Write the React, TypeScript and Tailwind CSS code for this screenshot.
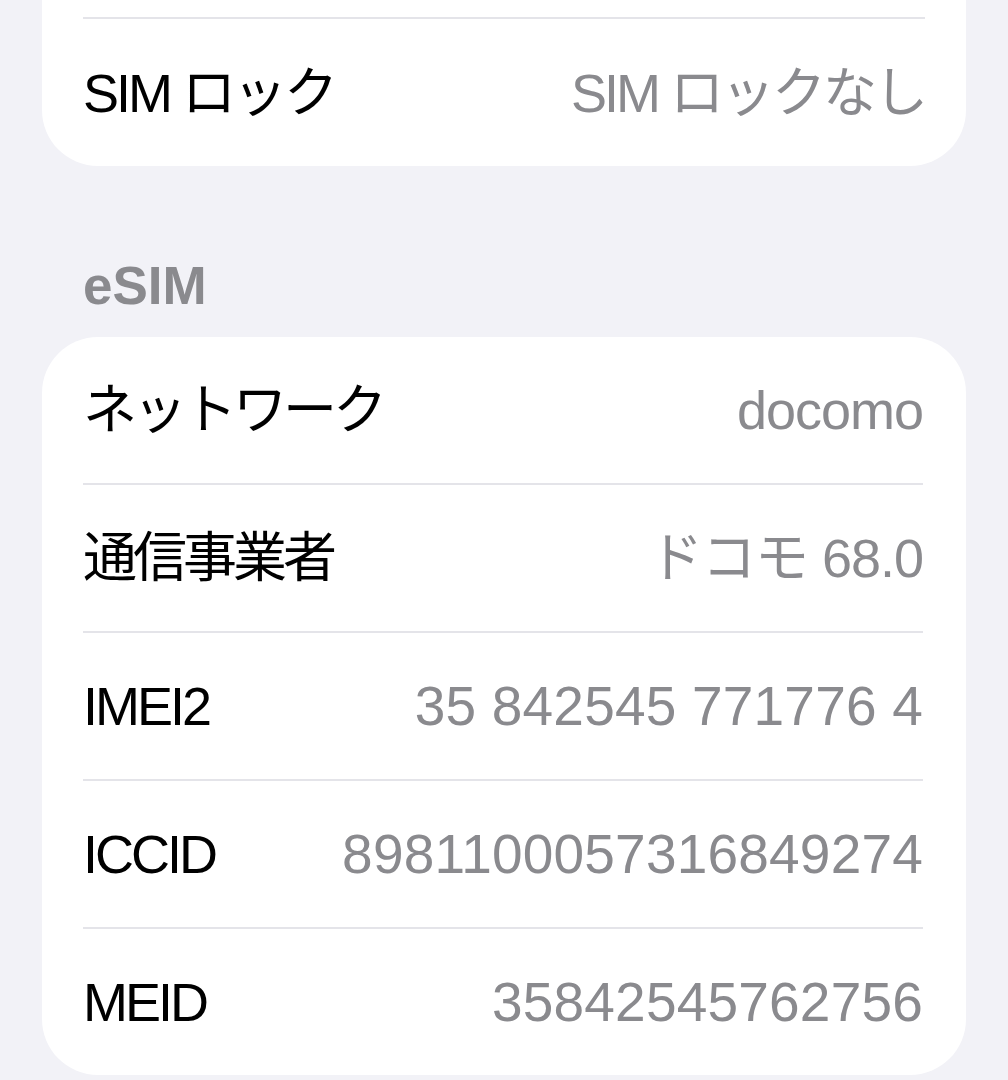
const font = {
  fontFamily: '"Liberation Sans", "Noto Sans CJK JP", sans-serif',
};

interface RowProps {
  label: string;
  value: string;
  first?: boolean;
  cjk?: boolean;
  num?: boolean;
}

function Row({ label, value, first = false, cjk = false, num = false }: RowProps) {
  return (
    <div className={first ? '' : 'border-t-2 border-[#e4e4e9]'}>
      <div className="h-[146px] flex items-center justify-between text-[54px] leading-none">
        <span className={cjk ? 'text-black tracking-[-4px] whitespace-nowrap' : 'text-black tracking-[-3px] whitespace-nowrap'}>
          {label}
        </span>
        <span
          className={
            num
              ? 'text-[#8a8a8e] text-[55px] tracking-[0.2px] whitespace-nowrap'
              : 'text-[#8a8a8e] tracking-[-1px] whitespace-nowrap'
          }
        >
          {value}
        </span>
      </div>
    </div>
  );
}

const esimRows = [
  { label: 'ネットワーク', value: 'docomo', cjk: true },
  { label: '通信事業者', value: 'ドコモ 68.0', cjk: true },
  { label: 'IMEI2', value: '35 842545 771776 4', num: true },
  { label: 'ICCID', value: '8981100057316849274', num: true },
  { label: 'MEID', value: '35842545762756', num: true },
];

export default function App() {
  return (
    <div className="min-h-[1080px] bg-[#f2f2f7] px-[42px] overflow-hidden" style={font}>
      {/* previous section, cut off at top */}
      <div className="bg-white rounded-b-[56px] px-[41px] pt-[17px]">
        <div className="border-t-2 border-[#e4e4e9]">
          <div className="h-[147px] flex items-center justify-between text-[54px] leading-none">
            <span className="text-black tracking-[-3px]">SIM ロック</span>
            <span className="text-[#8a8a8e] tracking-[-3px]">SIM ロックなし</span>
          </div>
        </div>
      </div>

      {/* eSIM header */}
      <div className="h-[171px] flex items-end pb-[25px] pl-[41px]">
        <span className="text-[53px] leading-none font-bold text-[#8a8a8e]">eSIM</span>
      </div>

      <div className="bg-white rounded-[56px] pl-[41px] pr-[43px]">
        {esimRows.map((r, i) => (
          <Row key={r.label} label={r.label} value={r.value} cjk={r.cjk} num={r.num} first={i === 0} />
        ))}
      </div>
    </div>
  );
}
